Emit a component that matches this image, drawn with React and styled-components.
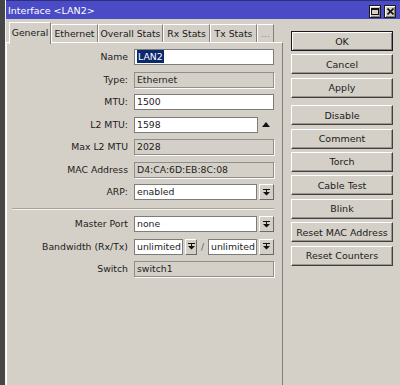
import styled, { createGlobalStyle } from 'styled-components';

const Global = createGlobalStyle`
    html, body {
        margin: 0;
        background: #464646;
        font-family: "DejaVu Sans", "Liberation Sans", sans-serif;
    }
`

const Window = styled.div`
    margin-left: 5px;
    width: 395px;
    height: 385px;
    background: #d4d0c8;
    display: flex;
    flex-direction: column;
    box-sizing: border-box;
    border-left: 1px solid #f4f2ee;
    overflow: hidden;
`
const TitleBar = styled.div`
    height: 19px;
    flex: none;
    background: #4b4bc6;
    border-top: 1px solid #2e2e7a;
    box-sizing: border-box;
    color: #fff;
    font-size: 9.5px;
    display: flex;
    align-items: center;
    justify-content: space-between;
    padding: 0 4px 0 2px;
`
const WinButtons = styled.div`
    display: flex;
    gap: 3px;
    margin-top: 2px;
`
const WinButton = styled.div`
    width: 12px;
    height: 13px;
    box-sizing: border-box;
    background: #d4d0c8;
    border: 1px solid #1a1a1a;
    box-shadow: inset 1px 1px #fff, inset -1px -1px #808080;
    display: flex;
    align-items: center;
    justify-content: center;
`
const Main = styled.div`
    flex: 1;
    display: flex;
`
const LeftCol = styled.div`
    width: 277px;
    display: flex;
    flex-direction: column;
`
const Tabs = styled.div`
    margin-top: 3px;
    height: 20px;
    display: flex;
    align-items: flex-end;
    padding-left: 3px;
    position: relative;
    z-index: 1;
`
const Tab = styled.div`
    width: ${p => p.$w}px;
    height: ${p => (p.$active ? 22 : 18)}px;
    margin-bottom: ${p => (p.$active ? -2 : 0)}px;
    box-sizing: border-box;
    background: #d4d0c8;
    border-top: 1px solid #fff;
    border-left: 1px solid #fff;
    border-right: 1px solid #808080;
    display: flex;
    align-items: center;
    justify-content: center;
    font-size: 9.3px;
    color: ${p => (p.$dim ? '#8a8a8a' : '#1a1a1a')};
    padding-bottom: ${p => (p.$active ? 3 : 0)}px;
`
const Panel = styled.div`
    flex: 1;
    border: 1px solid;
    border-color: #fff #808080 #808080 #fff;
    border-bottom: none;
`
const Form = styled.div`
    display: grid;
    grid-template-columns: 121px 140px;
    column-gap: 6px;
    row-gap: 6.5px;
    padding-top: 6px;
    font-size: 9.3px;
    color: #1c1c1c;
`
const Label = styled.div`
    justify-self: end;
    line-height: 16px;
    white-space: nowrap;
`
const Field = styled.div`
    display: flex;
    align-items: center;
    height: 16px;
`
const Input = styled.div`
    flex: 1;
    height: 16px;
    box-sizing: border-box;
    background: ${p => (p.$readonly ? '#d4d0c8' : '#fff')};
    border: 1px solid ${p => (p.$readonly ? '#8e8e8e' : '#7c7c7c')};
    box-shadow: ${p => (p.$readonly ? '1px 1px 0 #fbfbfb' : 'none')};
    padding-left: 2px;
    line-height: 14px;
    white-space: nowrap;
    overflow: hidden;
`
const Selected = styled.span`
    display: inline-block;
    background: #0b2a6e;
    color: #fff;
    padding: 0 1px;
    line-height: 13px;
`
const DropButton = styled.div`
    width: ${p => p.$w}px;
    height: 16px;
    flex: none;
    margin-left: 2px;
    box-sizing: border-box;
    background: #d4d0c8;
    border: 1px solid;
    border-color: #fff #6a6a6a #6a6a6a #fff;
    display: flex;
    align-items: center;
    justify-content: center;
`
const Spin = styled.div`
    width: 16px;
    flex: none;
    display: flex;
    align-items: center;
    justify-content: center;
`
const Slash = styled.span`
    width: 11px;
    flex: none;
    text-align: center;
    color: #5b6075;
`
const Separator = styled.div`
    grid-column: 1 / -1;
    margin: 1px 0 0 5px;
    border-top: 1px solid #a8a49c;
    border-bottom: 1px solid #f4f2ee;
`
const RightCol = styled.div`
    width: 102px;
    margin-left: 8px;
    padding-top: 12px;
    display: flex;
    flex-direction: column;
    gap: 3.4px;
`
const Button = styled.div`
    height: 20px;
    box-sizing: border-box;
    background: #d4d0c8;
    border: 1px solid;
    border-color: ${p => (p.$default ? '#1a1a1a' : '#fff #404040 #404040 #fff')};
    box-shadow: ${p => (p.$default
        ? 'inset 1px 1px #fff, inset -1px -1px #808080'
        : 'inset -1px -1px #9a968e')};
    display: flex;
    align-items: center;
    justify-content: center;
    font-size: 9.5px;
    color: #1a1a1a;
    white-space: nowrap;
    margin-top: ${p => (p.$gapBefore ? 4 : 0)}px;
`

const DropIcon = () => (
  <svg width="7" height="7" viewBox="0 0 7 7">
    <path d="M0 0h7v1H0z M3 1h1v2H3z M0 3h7L3.5 6.5z" fill="#111" />
  </svg>
)

const UpIcon = () => (
  <svg width="8" height="5" viewBox="0 0 8 5">
    <path d="M0 5L4 0L8 5z" fill="#111" />
  </svg>
)

const tabs = [
  { name: 'General', w: 42, active: true },
  { name: 'Ethernet', w: 47 },
  { name: 'Overall Stats', w: 65 },
  { name: 'Rx Stats', w: 47 },
  { name: 'Tx Stats', w: 47 },
  { name: '...', w: 17, dim: true },
]

const buttons = ['OK', 'Cancel', 'Apply', 'Disable', 'Comment', 'Torch', 'Cable Test', 'Blink', 'Reset MAC Address', 'Reset Counters']

const App = () => {
  return (
    <>
      <Global />
      <Window>
        <TitleBar>
          <span>Interface &lt;LAN2&gt;</span>
          <WinButtons>
            <WinButton>
              <svg width="8" height="7" viewBox="0 0 8 7">
                <path d="M0 0h8v7H0z M1 2v4h6V2z" fill="#111" fillRule="evenodd" />
              </svg>
            </WinButton>
            <WinButton>
              <svg width="7" height="7" viewBox="0 0 7 7">
                <path d="M0.5 0.5L6.5 6.5M6.5 0.5L0.5 6.5" stroke="#111" strokeWidth="1.6" />
              </svg>
            </WinButton>
          </WinButtons>
        </TitleBar>
        <Main>
          <LeftCol>
            <Tabs>
              {tabs.map(t => (
                <Tab key={t.name} $w={t.w} $active={t.active} $dim={t.dim}>{t.name}</Tab>
              ))}
            </Tabs>
            <Panel>
              <Form>
                <Label>Name</Label>
                <Field><Input><Selected>LAN2</Selected></Input></Field>
                <Label>Type:</Label>
                <Field><Input $readonly>Ethernet</Input></Field>
                <Label>MTU:</Label>
                <Field><Input>1500</Input></Field>
                <Label>L2 MTU:</Label>
                <Field><Input>1598</Input><Spin><UpIcon /></Spin></Field>
                <Label>Max L2 MTU</Label>
                <Field><Input $readonly>2028</Input></Field>
                <Label>MAC Address</Label>
                <Field><Input $readonly>D4:CA:6D:EB:8C:08</Input></Field>
                <Label>ARP:</Label>
                <Field><Input>enabled</Input><DropButton $w={15}><DropIcon /></DropButton></Field>
                <Separator />
                <Label>Master Port</Label>
                <Field><Input>none</Input><DropButton $w={15}><DropIcon /></DropButton></Field>
                <Label>Bandwidth (Rx/Tx)</Label>
                <Field>
                  <Input>unlimited</Input>
                  <DropButton $w={12}><DropIcon /></DropButton>
                  <Slash>/</Slash>
                  <Input>unlimited</Input>
                  <DropButton $w={15}><DropIcon /></DropButton>
                </Field>
                <Label>Switch</Label>
                <Field><Input $readonly>switch1</Input></Field>
              </Form>
            </Panel>
          </LeftCol>
          <RightCol>
            {buttons.map((b, i) => (
              <Button key={b} $default={i === 0} $gapBefore={b === 'Disable'}>{b}</Button>
            ))}
          </RightCol>
        </Main>
      </Window>
    </>
  )
}

export default App
